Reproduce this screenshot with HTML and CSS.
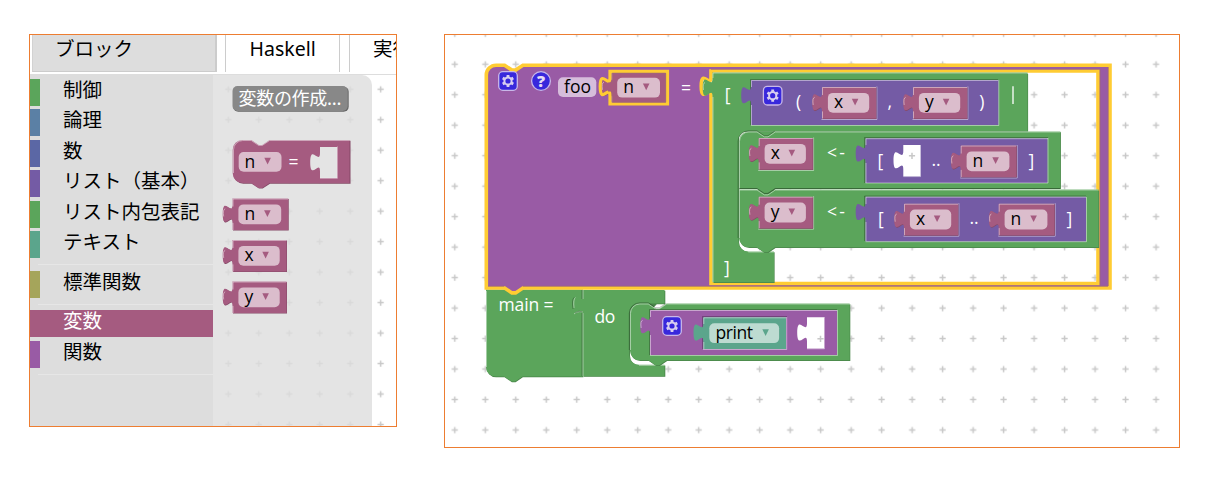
FILE: index.html
```html
<!DOCTYPE html>
<html lang="ja">
<head>
<meta charset="utf-8">
<title>ブロック</title>
<link rel="stylesheet" href="styles.css">
</head>
<body>
<main class="page">
<section class="panel editor">
  <nav class="tabs">
    <div class="tab active">ブロック</div>
    <div class="tab haskell">Haskell</div>
    <div class="tab run">実行</div>
  </nav>
  <div class="editor-body">
    <ul class="toolbox">
      <li class="cat green">制御</li>
      <li class="cat blue">論理</li>
      <li class="cat indigo">数</li>
      <li class="cat violet">リスト（基本）</li>
      <li class="cat green">リスト内包表記</li>
      <li class="cat teal">テキスト</li>
      <li class="separator"></li>
      <li class="cat olive">標準関数</li>
      <li class="separator"></li>
      <li class="cat selected">変数</li>
      <li class="cat purple">関数</li>
      <li class="separator"></li>
    </ul>
    <svg class="flyout" width="183" height="351" viewBox="213 75 183 351">
      <defs>
        <pattern id="grid-left" patternUnits="userSpaceOnUse" x="213" y="74" width="30.48" height="30.48">
          <path class="cross" d="M12.2,15.3h6.2M15.3,12.2v6.2"/>
        </pattern>
      </defs>
      <rect x="213" y="75" width="183" height="351" fill="url(#grid-left)"/>
      <path class="flyout-bg" d="M213,75H362a10,10 0 0 1 10,10V426H213z"/>
      <rect class="button-shadow" x="233.200" y="86.800" width="115.500" height="25" rx="5"/>
      <rect class="button" x="232.500" y="86" width="115.200" height="25" rx="5"/>
      <text class="button-text" x="238.500" y="105" textLength="103">変数の作成...</text>

      <g class="c-var">
        <path class="dark" transform="translate(.5,.7)" d="M233,149.800a9.800,9.800 0 0 1 9.800,-9.800H251.300l7.300,4.900h3.700l7.300,-4.900H350V183H269.500l-7.300,4.900h-3.700l-7.300,-4.900H242.800a9.800,9.800 0 0 1 -9.800,-9.800z"/>
        <path class="face" d="M232.700,149.800a9.800,9.800 0 0 1 9.800,-9.800H251.300l7.300,4.900h3.700l7.300,-4.900H349.500V183H269.500l-7.300,4.900h-3.700l-7.300,-4.900H242.500a9.800,9.800 0 0 1 -9.800,-9.800z"/>
        <path class="light" d="M233.500,173V149.800a9.300,9.300 0 0 1 9.300,-9.300H251.300l7.300,4.900h3.700l7.300,-4.900H349.500"/>
      </g>
      <path class="flyout-bg hole" d="M320,147H337V178H320V171.400c0,-12.200 -9.800,9.800 -9.800,-9.100s9.800,3 9.800,-9.200z"/>
      <path class="light" d="M320,178.300H337.400V146.500"/>
      <rect class="pill p-var" x="238.700" y="152" width="42.800" height="19.800" rx="5"/>
      <text class="value" x="244.500" y="167.500">n</text>
      <path class="arrow a-var" d="M264.300,157.800h6.600l-3.300,6.600z"/>
      <text class="label" x="288.500" y="167.800">=</text>
      <use href="#var-n" x="232.500" y="198.500"/>
      <use href="#var-x" x="232.500" y="240"/>
      <use href="#var-y" x="232.500" y="281.500"/>
    </svg>
  </div>
</section>

<section class="panel workspace">
  <svg width="735" height="412" viewBox="445 35 735 412">
    <defs>
      <pattern id="grid-right" patternUnits="userSpaceOnUse" x="439.500" y="49" width="30.490" height="30.480">
        <path class="cross" d="M12.200,15.300h6.200M15.300,12.200v6.200"/>
      </pattern>
      <g id="gear">
        <rect class="icon-box" x=".7" y=".7" width="18.600" height="18.600" rx="4"/>
        <circle class="gear-ring" cx="10" cy="10" r="3.600"/>
        <path class="gear-teeth" d="M10,3.900v2.200M10,13.900v2.200M4.720,6.950l1.900,1.100M13.380,11.950l1.900,1.100M4.720,13.050l1.900,-1.100M13.380,8.050l1.900,-1.100"/>
      </g>
      <path id="short-shape" d="M0,0H54V31.500H0V24.400c0,-12.200 -9.800,9.800 -9.800,-9.100s9.800,3 9.800,-9.200z"/>
      <path id="long-shape" d="M0,0H55.700V31.500H0V24.400c0,-12.200 -9.800,9.800 -9.800,-9.100s9.800,3 9.800,-9.200z"/>
      <g id="short-var" class="c-var">
        <use href="#short-shape" class="dark" x=".5" y=".6"/>
        <use href="#short-shape" class="face"/>
        <path class="light" d="M.5,31.500V24.400M-8.800,18q-1.200,-7 1.500,-7.700M.5,8V.5H54"/>
        <rect class="pill p-var" x="5.900" y="5.900" width="41.300" height="19.900" rx="5"/>
        <path class="arrow a-var" d="M29.800,11.800h6.600l-3.300,6.600z"/>
      </g>
      <g id="var-x"><use href="#short-var"/><text class="value" x="12" y="21.400">x</text></g>
      <g id="var-y"><use href="#short-var"/><text class="value" x="12" y="21.400">y</text></g>
      <g id="var-n" class="c-var">
        <use href="#long-shape" class="dark" x=".5" y=".6"/>
        <use href="#long-shape" class="face"/>
        <path class="light" d="M.5,31.500V24.400M-8.800,18q-1.200,-7 1.500,-7.700M.5,8V.5H55.500"/>
        <rect class="pill p-var" x="5.900" y="5.900" width="42.800" height="19.900" rx="5"/>
        <path class="arrow a-var" d="M31.600,11.800h6.600l-3.300,6.600z"/>
        <text class="value" x="11.900" y="21.400">n</text>
      </g>
      <path id="socket-short" class="light" d="M-.5,32.500H54.900V-.5"/>
      <path id="socket-long" class="light" d="M-.5,32.500H56.500V-.5"/>
    </defs>
    <rect x="445" y="35" width="735" height="412" fill="url(#grid-right)"/>

    <!-- main = do -->
    <g class="c-green">
      <path class="dark" transform="translate(.4,.8)" d="M486,289.500H583V376.500H522.500l-7.300,4.900h-3.700l-7.300,-4.900H495.800a9.800,9.800 0 0 1 -9.800,-9.800z"/>
      <path class="face" d="M486,289.500H583V376.500H522.500l-7.300,4.900h-3.700l-7.300,-4.900H495.800a9.800,9.800 0 0 1 -9.800,-9.800z"/>
      <path class="light" d="M486.500,367V291"/>
      <path class="dark" transform="translate(.8,.8)" d="M583,290H664.500V303.500H656l-4,4h-7l-6,-4a9.800,9.800 0 0 0 -9.800,9.800V355a9.800,9.800 0 0 0 9.800,9.800H664.500V376H583z"/>
      <path class="face" d="M583,290H664.500V303.500H639a9.800,9.800 0 0 0 -9.800,9.800V355a9.800,9.800 0 0 0 9.800,9.800H664.500V376.200H583z"/>
      <path class="light" d="M583,376V313M583,299V290M574,308q-1,-9 1.500,-10.500M574,314l2,-1.500q3,-1.500 7,-.5"/>
      <path class="edge" d="M573,309q-1.500,-9 1,-11.500M575,313q4,-3 7.500,-1M582,376V313M582,299V290"/>
      <path class="light" d="M639,365.300H664.500"/>

      <path class="dark" transform="translate(.6,.7)" d="M630,313.300a9.800,9.800 0 0 1 9.800,-9.800H648.300l7.300,4.900h3.700l7.300,-4.900H849.700V360.300H666.600l-7.300,4.900h-3.700l-7.300,-4.900H639.800a9.800,9.800 0 0 1 -9.800,-9.800z"/>
      <path class="face" d="M630,313.300a9.800,9.800 0 0 1 9.800,-9.800H648.300l7.300,4.900h3.700l7.300,-4.900H849.700V360.300H666.600l-7.300,4.900h-3.700l-7.300,-4.900H639.800a9.800,9.800 0 0 1 -9.800,-9.800z"/>
      <path class="edge" d="M629.300,350V313.300a10.500,10.500 0 0 1 10.500,-10.500H648.300l7.300,4.900h3.700l6.500,-4"/>
      <path class="light" d="M630.500,350V313.300a9.300,9.300 0 0 1 9.300,-9.300H648.300l7.300,4.900h3.700l7.300,-4.900H850"/>
    </g>
    <text class="label" x="498.500" y="310.500" textLength="55">main =</text>
    <text class="label" x="594.500" y="322.500" textLength="20.800">do</text>
    <g class="c-purple">
      <path class="edge" d="M649.500,355V309.500H837"/>
      <path class="face" d="M650,310H837V355H650V334.400c0,-12.200 -9.800,9.800 -9.800,-9.100s9.800,3 9.800,-9.200z"/>
      <path class="light" d="M650,355.500H837.500V310M650.500,355V335M650.500,317V310.500H837M641.200,328q-1.200,-7 1.500,-7.700"/>
    </g>
    <use href="#gear" x="662" y="316"/>
    <g class="c-teal">
      <path class="edge" d="M702.500,349V316.500H787"/>
      <path class="face" d="M703.300,317.300H786V349H703.300V341.700c0,-12.200 -9.800,9.800 -9.800,-9.100s9.800,3 9.800,-9.200z"/>
      <path class="light" d="M703,349.500H786.700V317M703.800,349V342M703.800,324V317.800H786"/>
    </g>
    <rect class="pill p-teal" x="709.300" y="323.300" width="69.800" height="19.800" rx="5"/>
    <text class="value" x="715.500" y="339" textLength="37.500">print</text>
    <path class="arrow a-teal" d="M762.300,329.300h6.600l-3.300,6.600z"/>
    <path class="white-hole" d="M807,317.200H824V348.500H807V341.600c0,-12.200 -9.800,9.800 -9.800,-9.100s9.800,3 9.800,-9.200z"/>
    <path class="light" d="M807,348.800H824.500V317"/>
    <path class="cross" d="M817.400,338.800h6.200M820.500,335.700v6.200"/>

    <!-- foo n = [ ... ] -->
    <path class="foo-body" fill-rule="evenodd" d="M486.300,75a9.800,9.800 0 0 1 9.800,-9.800H504.600l7.300,4.900h3.700l7.300,-4.900H1110V288H522.900l-7.300,4.900h-3.700l-7.300,-4.900H486.300z M711,71H1098V283.500H711V95.400c0,-12.200 -9.800,9.800 -9.800,-9.100s9.800,3 9.800,-9.200z"/>
    <path class="foo-edge" d="M488,286.200H504M523,286.200H1108M1108.200,67V286M1100,69.500V285.500M711,69.300H1100"/>
    <use href="#gear" x="498" y="71"/>
    <circle class="icon-box" cx="541" cy="81" r="9.400"/>
    <text class="question" x="541" y="87" text-anchor="middle">?</text>
    <rect class="pill p-purple" x="558" y="77.200" width="38.300" height="19.800" rx="5"/>
    <text class="value" x="564" y="93" textLength="27">foo</text>
    <use href="#var-n" x="611.300" y="71.800"/>
    <path class="ring" d="M610,71.300H667.500V104H610V95.700c0,-12.200 -9.800,9.800 -9.800,-9.100s9.800,3 9.800,-9.200z"/>
    <path class="foo-edge" d="M612.200,102.200V73.200H665.700V102.200z"/>
    <path class="tab-fill" d="M608,82.500h5v9h-5z"/>
    <text class="label" x="681" y="93.500">=</text>

    <g class="c-green">
      <path class="dark" transform="translate(.6,.7)" d="M713,73H1027.500V131H738.500V241.700a9.800,9.800 0 0 0 9.800,9.800H774V282.300H713z"/>
      <path class="face" d="M712.500,72.500H1027.500V131H748.300a9.800,9.800 0 0 0 -9.800,9.800V241.700a9.800,9.800 0 0 0 9.800,9.800H774V282.300H712.500V96.700c0,-12.200 -9.800,9.800 -9.800,-9.100s9.800,3 9.800,-9.200z"/>
      <path class="light" d="M713,282V97M713,78V73H1027.500M748.300,252H774M703.500,90q-1,-7 1.500,-7.500"/>

      <path class="dark" transform="translate(.6,.7)" d="M739,190H1098.500V247.300H775l-7.300,4.900h-3.700l-7.300,-4.900H748.800a9.800,9.800 0 0 1 -9.800,-9.800z"/>
      <path class="face" d="M739,189.500H1098.500V247.300H775l-7.300,4.900h-3.700l-7.300,-4.900H748.800a9.800,9.800 0 0 1 -9.800,-9.800z"/>
      <path class="light" d="M739.500,238V190H757l7.300,4.900h3.700l7.300,-4.900H1098"/>
      <path class="dark" transform="translate(.6,.7)" d="M739,141.300a9.800,9.800 0 0 1 9.800,-9.800H1060.300V188.200H775l-7.300,4.900h-3.700l-7.300,-4.900H739z"/>
      <path class="face" d="M739,141.300a9.800,9.800 0 0 1 9.800,-9.800H1060.300V188.200H775l-7.300,4.900h-3.700l-7.300,-4.900H739z"/>
      <path class="edge" d="M738,238V141.300a10.500,10.500 0 0 1 10.500,-10.500H757l7.300,4.900h3.700l6.500,-4.500M739,188.500H757l7.300,4.900h3.700l7.300,-4.900H1060"/>
      <path class="light" d="M739.500,188V141.300a9.300,9.300 0 0 1 9.300,-9.300H757l7.300,4.900h3.700l7.300,-4.900H1060"/>
    </g>
    <g class="c-violet">
      <path class="edge" d="M750.500,125V79.500H998M864.500,183V137.500H1048M864.500,241V196H1086"/>
      <path class="face" d="M751,80H998.500V125H751V104.400c0,-12.200 -9.800,9.800 -9.800,-9.100s9.800,3 9.800,-9.200z"/>
      <path class="light" d="M751,125.500H998.800V80M751.500,125V105M751.500,87V80.500H998"/>
      <path class="face" d="M865.500,138.200H1047.500V183H865.500V162.600c0,-12.200 -9.800,9.800 -9.800,-9.100s9.800,3 9.800,-9.200z"/>
      <path class="light" d="M865.500,183H1048V138M866,183V163M866,145V138.700H1048"/>
      <path class="face" d="M865.500,196.700H1086V241.500H865.500V221.100c0,-12.200 -9.800,9.800 -9.800,-9.100s9.800,3 9.800,-9.200z"/>
      <path class="light" d="M865.500,241.700H1086.500V197M866,241V222M866,204V197.200H1086"/>
    </g>
    <use href="#gear" x="762.700" y="85.700"/>
    <text class="label" x="724.700" y="101">[</text>
    <text class="label" x="796" y="108">(</text>
    <text class="label" x="887.500" y="108">,</text>
    <text class="label" x="979.300" y="108">)</text>
    <path class="bar" d="M1013,86.300V104"/>
    <use href="#socket-short" x="822" y="87"/><use href="#var-x" x="822" y="87"/>
    <use href="#socket-short" x="913" y="87"/><use href="#var-y" x="913" y="87"/>

    <use href="#socket-short" x="758.700" y="138"/><use href="#var-x" x="758.700" y="138"/>
    <text class="label" x="827" y="159" textLength="18">&lt;-</text>
    <text class="label" x="877.500" y="166.500">[</text>
    <path class="white-hole" d="M903.300,145H920.300V176.300H903.300V169.400c0,-12.200 -9.800,9.800 -9.800,-9.100s9.800,3 9.800,-9.200z"/>
    <path class="light" d="M903.300,176.600H920.500V145"/>
    <path class="cross" d="M908.900,155.800h6.200M912,152.700v6.200"/>
    <text class="label" x="931.500" y="166">..</text>
    <use href="#socket-long" x="960.700" y="145.500"/><use href="#var-n" x="960.700" y="145.500"/>
    <text class="label" x="1028.500" y="166.500">]</text>

    <use href="#socket-short" x="758.700" y="196.700"/><use href="#var-y" x="758.700" y="196.700"/>
    <text class="label" x="827" y="217.500" textLength="18">&lt;-</text>
    <text class="label" x="878" y="224.500">[</text>
    <use href="#socket-short" x="904" y="203.700"/><use href="#var-x" x="904" y="203.700"/>
    <text class="label" x="969.500" y="224">..</text>
    <use href="#socket-long" x="998.700" y="203.700"/><use href="#var-n" x="998.700" y="203.700"/>
    <text class="label" x="1066.500" y="224.500">]</text>
    <text class="label" x="724" y="273.500">]</text>
  </svg>
</section>
</main>
</body>
</html>
```
FILE: styles.css
```css
* { box-sizing: border-box; }
body { margin: 0; background: #fff; color: #000; font-family: "Open Sans", "Noto Sans CJK JP", sans-serif; }
.page { display: flex; align-items: flex-start; gap: 47px; padding: 34px 0 0 29px; height: 487px; overflow: hidden; }
.panel { border: 1px solid #ed7d31; overflow: hidden; flex: none; }
.editor { width: 368px; height: 393px; }
.workspace { width: 736px; height: 414px; }
svg { display: block; }

.tabs { display: flex; height: 40px; padding-left: 2px; border-bottom: 1px solid #ddd; font-size: 19.500px; line-height: 28px; white-space: nowrap; }
.tab { flex: none; height: 37px; border: 1px solid #ccc; border-top: 0; border-bottom: 0; }
.tab.active { width: 185px; padding-left: 22px; margin-right: 8px; background: #ddd; border-right-width: 2px; border-bottom: 1px solid #ccc; border-left-color: #d2d2d2; }
.tab.haskell { width: 115px; padding-left: 23.500px; margin-right: 9px; font-family: "Noto Sans", sans-serif; font-size: 19.500px; }
.tab.run { width: 100px; padding-left: 23px; }
.editor-body { display: flex; }

.toolbox { width: 183px; height: 351px; margin: 0; padding: 4px 0 0; background: #ddd; list-style: none; font-family: "Noto Sans CJK JP", sans-serif; font-size: 19.500px; }
.cat { height: 27px; margin-bottom: 3.450px; padding-left: 23px; border-left: 10px solid; line-height: 20px; white-space: nowrap; }
.cat.green { border-color: #5ba55b; }
.cat.blue { border-color: #5b80a5; }
.cat.indigo { border-color: #5b67a5; }
.cat.violet { border-color: #745ba5; }
.cat.teal { border-color: #5ba58c; }
.cat.olive { border-color: #a5a55b; }
.cat.purple { border-color: #995ba5; }
.cat.selected { border-color: #a55b80; background: #a55b80; color: #fff; }
.separator { height: 1px; margin: 6px 0 5.500px 8px; background: #e6e6e6; }

.cross { stroke: #c8c8c8; stroke-width: 1.500; fill: none; }
.flyout-bg { fill: #ddd; fill-opacity: .8; }
.flyout-bg.hole { fill: #e4e4e4; fill-opacity: 1; }
.button { fill: #888; }
.button-shadow { fill: #666; }
.button-text { fill: #fff; font-family: "Noto Sans CJK JP", sans-serif; font-size: 18px; }

.c-green { --face: #5ba55b; --shade: #498449; }
.c-var { --face: #a55b80; --shade: #844966; }
.c-purple { --face: #995ba5; --shade: #7a4984; }
.c-violet { --face: #745ba5; --shade: #5d4984; }
.c-teal { --face: #5ba58c; --shade: #498470; }
.face { fill: var(--face); }
.dark { fill: var(--shade); }
.light { fill: none; stroke: #fff; stroke-opacity: .45; stroke-width: 1; }
.edge { fill: none; stroke: #000; stroke-opacity: .25; stroke-width: 1; }
.white-hole { fill: #fff; }
.foo-body { fill: #995ba5; stroke: #fc3; stroke-width: 3.600; }
.ring { fill: none; stroke: #fc3; stroke-width: 3.200; }
.tab-fill { fill: #a55b80; }
.foo-edge { fill: none; stroke: #a06a75; stroke-width: .8; }

.p-var { fill: #dbbdcc; }
.p-purple { fill: #d6bddb; }
.p-teal { fill: #bddbd1; }
.a-var { fill: #a55b80; }
.a-teal { fill: #5ba58c; }
.value, .label { font-family: "Open Sans", sans-serif; font-size: 17.500px; }
.value { fill: #000; }
.label { fill: #fff; }
.bar { stroke: #fff; stroke-width: 1.300; }
.icon-box { fill: #3828dc; stroke: #c9b8e8; stroke-width: 1.300; }
.gear-ring { fill: none; stroke: #d9cff0; stroke-width: 2; }
.gear-teeth { stroke: #d9cff0; stroke-width: 2.800; }
.question { fill: #e6dcf4; font-family: "Open Sans", sans-serif; font-size: 16px; font-weight: 800; }
```
